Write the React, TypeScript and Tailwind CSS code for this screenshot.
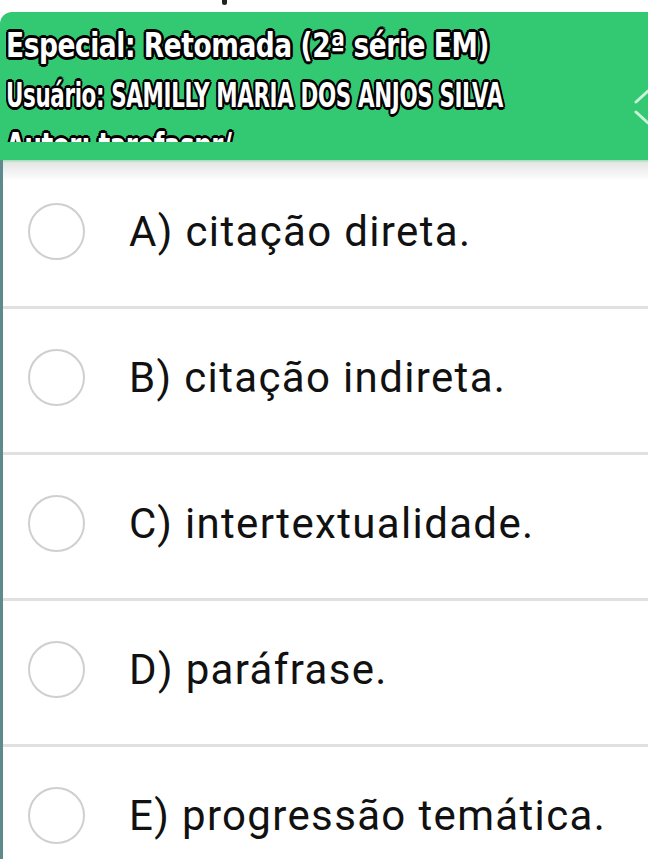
import React from 'react';

const options = [
  'A) citação direta.',
  'B) citação indireta.',
  'C) intertextualidade.',
  'D) paráfrase.',
  'E) progressão temática.',
];

const outline =
  '[text-shadow:2px_0_0_#000,-2px_0_0_#000,0_2px_0_#000,0_-2px_0_#000,2px_2px_0_#000,-2px_-2px_0_#000,2px_-2px_0_#000,-2px_2px_0_#000,3px_0_0_#000,0_3px_0_#000,-3px_0_0_#000,0_-3px_0_#000]';

export default function App() {
  return (
    <div className="relative h-[859px] w-[648px] overflow-hidden bg-white">
      {/* bout de la barre du dessus */}
      <div className="relative h-3">
        <div className="absolute left-[222px] top-0 h-[5px] w-[5px] rounded-b-sm bg-[#222]" />
      </div>

      <header className="relative h-[148px] rounded-tl-xl bg-[#33c872] pl-[6px] pt-[8px]">
        <div
          className={`h-[122px] overflow-hidden whitespace-nowrap font-['DejaVu_Sans_Condensed','DejaVu_Sans',sans-serif] text-[34px] font-bold leading-[50px] tracking-[-0.5px] text-white ${outline}`}
        >
          <div className="origin-left scale-x-[0.865]">Especial: Retomada (2ª série EM)</div>
          <div className="origin-left scale-x-[0.7]">Usuário: SAMILLY MARIA DOS ANJOS SILVA</div>
          <div className="origin-left scale-x-[0.8]">Autor: tarefaspr/</div>
        </div>
        <svg
          className="absolute right-0 top-[74px]"
          width="16"
          height="40"
          viewBox="0 0 16 40"
          fill="none"
          stroke="#c9f3d8"
          strokeWidth="3"
          strokeLinecap="round"
        >
          <path d="M16 5 L4 16" />
          <path d="M4 26 L16 37" />
        </svg>
      </header>

      <main className="border-l-[3px] border-[#5f8a8c]">
        <div className="h-[3px] bg-gradient-to-b from-[#9fdcb7] to-[#e8e8e8]" />
        <div className="relative">
          <div className="pointer-events-none absolute inset-x-0 top-0 h-[18px] bg-gradient-to-b from-[#e6e6e6] to-white" />
          {options.map((label, i) => (
            <div key={label}>
              {i > 0 && <div className="h-[3px] bg-[#e0e0e0]" />}
              <div className="relative flex h-[143px] items-center gap-[44px] pb-[6px] pl-[25px]">
                <div className="h-[57px] w-[57px] shrink-0 rounded-full border-2 border-[#cfcfcf]" />
                <span className="font-['Roboto',sans-serif] text-[42px] leading-none tracking-[1.35px] text-[#111]">
                  {label}
                </span>
              </div>
            </div>
          ))}
        </div>
      </main>
    </div>
  );
}
